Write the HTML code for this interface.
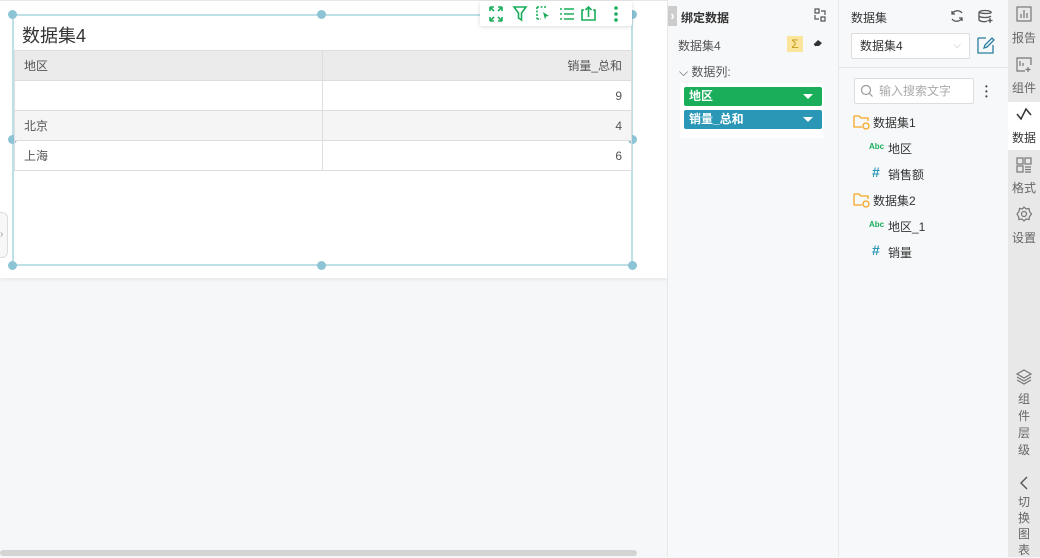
<!DOCTYPE html>
<html><head><meta charset="utf-8"><style>
*{box-sizing:border-box;margin:0;padding:0}
body{width:1040px;height:557px;overflow:hidden;background:#f6f7f9;font-family:"Liberation Sans","Noto Sans CJK SC",sans-serif;position:relative;color:#333}
.abs{position:absolute}
.canvas{left:0;top:0;width:667px;height:278px;background:#fff;box-shadow:0 2px 3px rgba(0,0,0,.06);border-top:1px solid #e8e8e8}
.sel{left:12px;top:14px;width:621px;height:252px;border:2px solid #bfe0e7}
.h{width:9px;height:9px;border-radius:50%;background:#8cc4d5;position:absolute}
table{border-collapse:collapse;font-size:12px;color:#555}
td{border:1px solid #ddd;height:30px;padding:0 9px}
.tb{left:480px;top:1px;width:152px;height:25px;background:#fff;box-shadow:0 1px 4px rgba(0,0,0,.15);border-radius:2px}
.p1{left:667px;top:0;width:171px;height:557px;background:#f7f8fa;border-left:1px solid #e8e8e8}
.p2{left:838px;top:0;width:170px;height:557px;background:#f7f8fa;border-left:1px solid #e8e8e8}
.p3{left:1008px;top:0;width:32px;height:557px;background:#e8e8e8}
.t{font-size:12px}
.tag{height:19px;color:#fff;font-size:12px;font-weight:bold;padding-left:5px;line-height:19px;border-radius:2px}
.tab{position:absolute;left:0;width:32px;text-align:center;font-size:12px;color:#666}
.arr{position:absolute;right:9px;top:7px;width:0;height:0;border-left:5px solid transparent;border-right:5px solid transparent;border-top:5px solid #fff}
</style></head><body>
<div class="abs canvas"></div>
<div class="abs" style="left:0;top:212px;width:8px;height:46px;border:1px solid #ddd;border-left:none;border-radius:0 6px 6px 0;background:#f7f7f7;font-size:10px;color:#999;line-height:44px">›</div>
<div class="abs sel"></div>
<div class="h" style="left:8px;top:10px"></div><div class="h" style="left:317px;top:10px"></div><div class="h" style="left:628px;top:10px"></div>
<div class="h" style="left:8px;top:135px"></div><div class="h" style="left:628px;top:135px"></div>
<div class="h" style="left:8px;top:261px"></div><div class="h" style="left:317px;top:261px"></div><div class="h" style="left:628px;top:261px"></div>
<div class="abs" style="left:22px;top:22px;font-size:18px;color:#333">数据集4</div>
<table class="abs" style="left:14px;top:50px;width:618px">
<tr style="background:#ebebeb"><td style="width:308px">地区</td><td style="text-align:right">销量_总和</td></tr>
<tr><td></td><td style="text-align:right">9</td></tr>
<tr style="background:#f5f5f5"><td>北京</td><td style="text-align:right">4</td></tr>
<tr><td style="height:28px">上海</td><td style="text-align:right">6</td></tr>
</table>
<div class="abs tb">
<svg width="152" height="25" fill="none" stroke="#1aad5a" stroke-width="1.6">
<path d="M10 6l4 4M10 6v4M10 6h4M22 6l-4 4M22 6v4M22 6h-4M10 20l4-4M10 20v-4M10 20h4M22 20l-4-4M22 20v-4M22 20h-4"/>
<path d="M34 6h12l-4.5 6v7l-3-2v-5z"/>
<path d="M57 6h10M57 6v12M57 18h4" stroke-dasharray="2 1.5"/><path d="M63 11l6 4-3 .5-1 3z" fill="#1aad5a" stroke="none"/>
<path d="M80 8h2M84 8h10M80 13h2M84 13h10M80 18h2M84 18h10"/>
<path d="M104 9h-2v10h13V9h-2M108.5 16V6M105.5 9l3-3 3 3"/>
<circle cx="136" cy="7" r="1" fill="#1aad5a"/><circle cx="136" cy="13" r="1" fill="#1aad5a"/><circle cx="136" cy="19" r="1" fill="#1aad5a"/>
</svg></div>
<div class="abs" style="left:0;top:550px;width:637px;height:6px;border-radius:3px;background:#d4d4d4"></div>

<div class="abs p1">
<div class="abs" style="left:0;top:6px;width:9px;height:20px;background:#ccc;color:#fff;font-size:13px;line-height:20px;text-align:center;font-weight:bold">›</div>
<div class="abs t" style="left:13px;top:9px;font-weight:bold;color:#333">绑定数据</div>
<svg class="abs" style="left:144px;top:7px" width="16" height="16" fill="none" stroke="#555" stroke-width="1.2"><path d="M3 2h4v4H3zM9 10h4v4H9zM9 4h4v4M7 12H3V8"/></svg>
<div class="abs t" style="left:10px;top:37px;color:#555">数据集4</div>
<div class="abs" style="left:119px;top:36px;width:16px;height:16px;background:#fbe49c;color:#c49a1a;font-size:12px;text-align:center;line-height:16px">Σ</div>
<svg class="abs" style="left:144px;top:38px" width="12" height="10"><path d="M2 6l4-4 4 3-3 3H3z" fill="#333"/><path d="M2 6l2 2" stroke="#333"/></svg>
<div class="abs t" style="left:11px;top:63px;color:#555">⌵ 数据列:</div>
<div class="abs" style="left:12px;top:83px;width:144px;height:55px;background:#fff"></div>
<div class="abs tag" style="left:16px;top:87px;width:138px;background:#1aae5b">地区<span class="arr"></span></div>
<div class="abs tag" style="left:16px;top:110px;width:138px;background:#2a97b6">销量_总和<span class="arr"></span></div>
</div>

<div class="abs p2">
<div class="abs t" style="left:12px;top:9px">数据集</div>
<svg class="abs" style="left:110px;top:8px" width="48" height="16" fill="none" stroke="#555" stroke-width="1.3"><path d="M13 5a6 6 0 0 0-10 1M3 3v3h3M3 11a6 6 0 0 0 10-1M13 13v-3h-3"/><path d="M30 4c2-2 10-2 12 0s-10 2-12 0M30 4v4c2 2 10 2 12 0M30 8v4c2 2 7 2 8 1M41 10v5M38.5 12.5h5"/></svg>
<div class="abs" style="left:12px;top:33px;width:119px;height:26px;background:#fff;border:1px solid #ddd;border-radius:2px;font-size:12px;line-height:24px;padding-left:8px">数据集4<span style="position:absolute;right:8px;color:#bbb;font-size:10px">⌵</span></div>
<svg class="abs" style="left:137px;top:35px" width="20" height="20" fill="none" stroke="#2a7ea0" stroke-width="1.3"><path d="M2 3h8M2 3v15h15v-8"/><path d="M8 13l1-3 7-7 2 2-7 7z"/></svg>
<div class="abs" style="left:0;top:67px;width:170px;border-top:1px solid #e5e5e5"></div>
<div class="abs" style="left:15px;top:78px;width:120px;height:26px;background:#fff;border:1px solid #ddd;border-radius:2px;font-size:12px;color:#aaa;line-height:24px;padding-left:24px">输入搜索文字</div>
<svg class="abs" style="left:21px;top:84px" width="14" height="14" fill="none" stroke="#999" stroke-width="1.2"><circle cx="6" cy="6" r="4.5"/><path d="M9.5 9.5l3 3"/></svg>
<div class="abs" style="left:146px;top:84px;width:3px;line-height:5px;font-size:8px;color:#444">•<br>•<br>•</div>
<svg class="abs" style="left:14px;top:114px" width="18" height="16" fill="none" stroke="#f5a623" stroke-width="1.3"><path d="M1 2h5l2 2h7v3M1 2v11h8"/><circle cx="13" cy="12" r="3"/></svg>
<div class="abs t" style="left:34px;top:114px">数据集1</div>
<div class="abs" style="left:30px;top:142px;font-size:8px;color:#1aae5b;font-weight:bold">Abc</div>
<div class="abs t" style="left:49px;top:140px">地区</div>
<div class="abs" style="left:33px;top:164px;font-size:14px;color:#2a97b6;font-weight:bold">#</div>
<div class="abs t" style="left:49px;top:166px">销售额</div>
<svg class="abs" style="left:14px;top:192px" width="18" height="16" fill="none" stroke="#f5a623" stroke-width="1.3"><path d="M1 2h5l2 2h7v3M1 2v11h8"/><circle cx="13" cy="12" r="3"/></svg>
<div class="abs t" style="left:34px;top:192px">数据集2</div>
<div class="abs" style="left:30px;top:220px;font-size:8px;color:#1aae5b;font-weight:bold">Abc</div>
<div class="abs t" style="left:49px;top:218px">地区_1</div>
<div class="abs" style="left:33px;top:242px;font-size:14px;color:#2a97b6;font-weight:bold">#</div>
<div class="abs t" style="left:49px;top:244px">销量</div>
</div>

<div class="abs p3">
<div class="abs" style="left:0;top:102px;width:32px;height:48px;background:#fff"></div>
<svg class="tab" style="top:6px;left:8px" width="16" height="16" fill="none" stroke="#777" stroke-width="1.2"><rect x="1" y="1" width="14" height="14"/><path d="M5 12V8M8 12V4M11 12V7"/></svg>
<div class="tab" style="top:29px">报告</div>
<svg class="tab" style="top:57px;left:8px" width="16" height="16" fill="none" stroke="#777" stroke-width="1.2"><path d="M9 14H1V1h14v7M4 9V4M7 9V6M12 10v5M9.5 12.5h5"/></svg>
<div class="tab" style="top:79px">组件</div>
<svg class="tab" style="top:107px;left:8px" width="16" height="14" fill="none" stroke="#333" stroke-width="1.5"><path d="M1 7l4 5 5-10 5 6"/></svg>
<div class="tab" style="top:129px;color:#333">数据</div>
<svg class="tab" style="top:157px;left:8px" width="16" height="16" fill="none" stroke="#777" stroke-width="1.2"><rect x="1" y="1" width="6" height="6"/><rect x="9" y="1" width="6" height="6"/><rect x="1" y="9" width="6" height="6"/><path d="M9 10h6M9 12.5h6M9 15h6"/></svg>
<div class="tab" style="top:179px">格式</div>
<svg class="tab" style="top:206px;left:8px" width="16" height="16" fill="none" stroke="#777" stroke-width="1.2"><circle cx="8" cy="8" r="2.5"/><path d="M8 1l2 2 3-.5.5 3 2 2.5-2 2.5-.5 3-3-.5-2 2-2-2-3 .5-.5-3L1 8l2-2.5.5-3 3 .5z"/></svg>
<div class="tab" style="top:229px">设置</div>
<svg class="tab" style="top:369px;left:8px" width="16" height="16" fill="none" stroke="#777" stroke-width="1.2"><path d="M8 1l7 4-7 4-7-4zM1 8l7 4 7-4M1 11l7 4 7-4"/></svg>
<div class="tab" style="top:391px;line-height:17px">组<br>件<br>层<br>级</div>
<svg class="tab" style="top:476px;left:11px" width="10" height="14" fill="none" stroke="#555" stroke-width="1.4"><path d="M8 1L2 7l6 6"/></svg>
<div class="tab" style="top:494px;line-height:16px">切<br>换<br>图<br>表</div>
</div>
</body></html>
